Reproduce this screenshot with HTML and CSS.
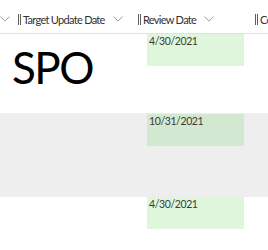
FILE: index.html
```html
<!doctype html>
<html lang="en">
  <head>
    <meta charset="UTF-8" />
    <title>Review list</title>
    <link rel="stylesheet" href="styles.css">
  </head>
  <body>
    <div class="grid">
      <div class="head">
        <div class="col col-a">
          <svg class="chev chev-cut" viewBox="0 0 12 7"><path d="M0.5 0.5 L6 6 L11.5 0.5" /></svg>
        </div>
        <div class="col col-b">
          <span class="grip"></span>
          <span class="label">Target Update Date</span>
          <svg class="chev" viewBox="0 0 12 7"><path d="M0.5 0.5 L6 6 L11.5 0.5" /></svg>
        </div>
        <div class="col col-c">
          <span class="grip"></span>
          <span class="label">Review Date</span>
          <svg class="chev" viewBox="0 0 12 7"><path d="M0.5 0.5 L6 6 L11.5 0.5" /></svg>
        </div>
        <div class="col col-d">
          <span class="grip"></span>
          <span class="label">Co</span>
        </div>
      </div>

      <div class="row row-1">
        <div class="cell cell-title">SPO</div>
        <div class="cell cell-date">4/30/2021</div>
      </div>

      <div class="row row-2 alt">
        <div class="cell cell-title"></div>
        <div class="cell cell-date">10/31/2021</div>
      </div>

      <div class="row row-3">
        <div class="cell cell-title"></div>
        <div class="cell cell-date">4/30/2021</div>
      </div>
    </div>
  </body>
</html>
```

FILE: styles.css
```css
:root {
  --text: #323130;
  --muted: #8a8886;
  --line: #e1e1e1;
  --alt: #eeeeee;
  --green: #dff6dd;
  --green-alt: #d3e8d0;
}

* {
  margin: 0;
  padding: 0;
  box-sizing: border-box;
}

body {
  font-family: "Lato", "Open Sans", sans-serif;
  color: var(--text);
  background: white;
  overflow: hidden;
}

.grid {
  width: 268px;
}

.head {
  display: grid;
  grid-template-columns: 17px 120px 117px 1fr;
  height: 34px;
  border-bottom: 1px solid var(--line);
}

.col {
  display: flex;
  align-items: center;
  gap: 2px;
  white-space: nowrap;
  overflow: hidden;
  padding-top: 5px;
  padding-left: 1px;
}

.col-a {
  justify-content: flex-end;
  padding-left: 0;
  padding-right: 7px;
}

.grip {
  width: 3px;
  height: 11px;
  border-left: 1px solid #605e5c;
  border-right: 1px solid #605e5c;
  flex-shrink: 0;
}

.label {
  font-size: 11px;
  letter-spacing: -0.7px;
}

.chev {
  width: 10px;
  height: 6px;
  margin-left: 6px;
  fill: none;
  stroke: var(--muted);
  stroke-width: 1;
  flex-shrink: 0;
}

.chev-cut {
  margin-left: 0;
}

.row {
  display: grid;
  grid-template-columns: 147px 97px 1fr;
}

.row-1 {
  height: 79px;
}

.row-2 {
  height: 84px;
  padding-top: 1px;
}

.row-3 {
  height: 60px;
}

.alt {
  background: var(--alt);
}

.cell-title {
  font-size: 44px;
  line-height: 1;
  letter-spacing: -1.5px;
  padding: 11px 0 0 12px;
  color: #000;
}

.cell-date {
  grid-column: 2;
  height: 32px;
  background: var(--green);
  padding: 1px 0 0 2px;
  font-size: 10.5px;
  line-height: 13px;
  letter-spacing: -0.4px;
  color: #3b3a39;
}

.alt .cell-date {
  background: var(--green-alt);
}
```
